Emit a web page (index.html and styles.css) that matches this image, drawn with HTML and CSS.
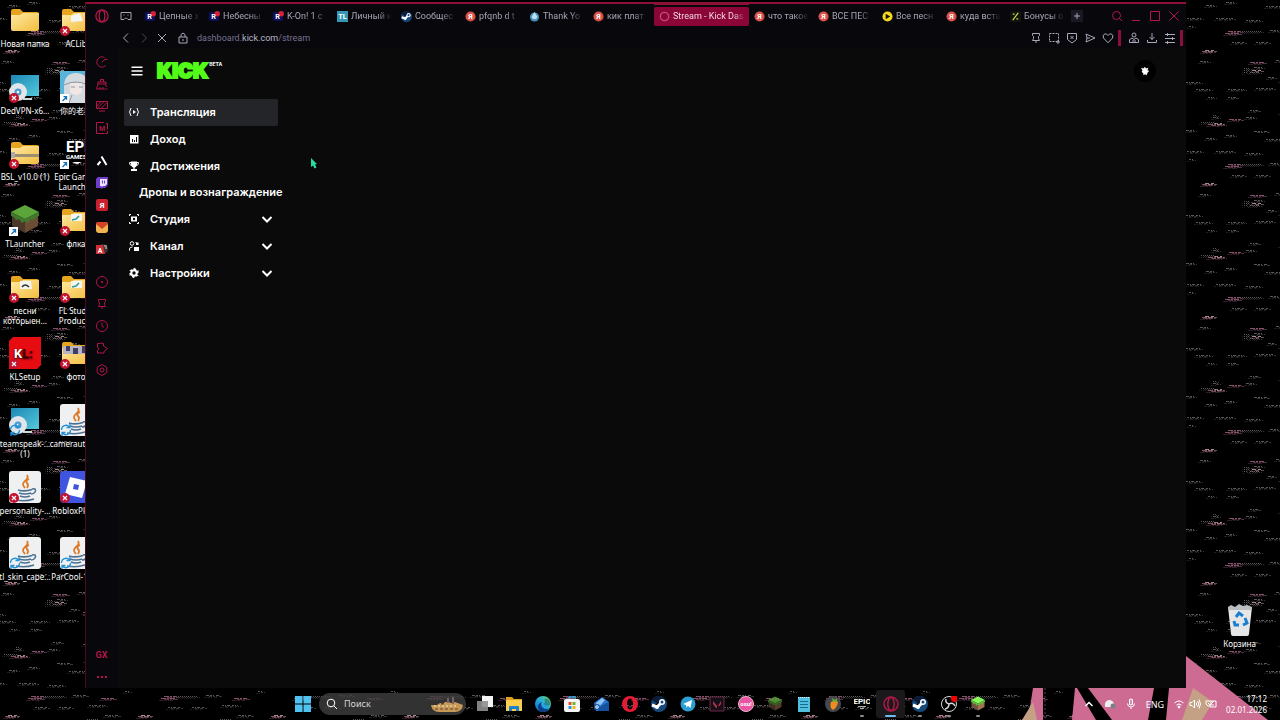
FILE: index.html
```html
<!DOCTYPE html>
<html lang="ru">
<head>
    <meta charset="UTF-8">
    <meta name="viewport" content="width=device-width, initial-scale=1.0">
    <title>Stream - Kick Dashboard</title>
    <link rel="stylesheet" href="styles.css">
</head>
<body>
    <!-- Wallpaper -->
    <svg class="wallpaper" aria-hidden="true">
        <defs>
            <pattern id="glitch" x="-11" y="0" width="133" height="133" patternUnits="userSpaceOnUse">
                <g id="streaks" fill="none" stroke="#5c5659" stroke-width="1">
                    <path stroke-dasharray="2 1 1 1 3 2" d="M1 18.500h15M30 18.500h17M60 20.500h14M80 6.500h20M110 12.500h18M3 26.500h4M46 42.500h12M70 42.500h12M100 40.500h16M0 82.500h14M10 89.500h15M42 89.500h16M70 88.500h17M100 92.500h20M22 97.500h6M42 97.500h8M64 110.500h10M94 112.500h14M126 104.500h7"/>
                    <path stroke-dasharray="3 1 2 1 1 2" d="M14 61.500h10M68 67.500h9M90 60.500h18M112 66.500h14M27 117.500h5M60 117.500h10M68 131.500h14M0 130.500h9M40 2.500h9M20 5.500h10M82 77.500h6M104 120.500h16M116 50.500h13M84 30.500h14M96 128.500h22"/>
                    <path stroke-dasharray="1 1" d="M54 31.500h22M15 122.500h14M58 70.500h5M58 72.500h4M58 68.500h5M64 72.500h10M27 115.500h4M98 54.500h12M118 84.500h8"/>
                    <path stroke="#84506a" stroke-dasharray="5 1 2 1" d="M39 33.500h15M42 31.500h12M16 51.500h11M64 62.500h14M22 124.500h16M43 119.500h12M94 80.500h16M112 33.500h13"/>
                    <path stroke="#a8888f" stroke-dasharray="4 2" d="M19 50.500h9M28 123.500h8M66 70.500h9M96 81.500h12"/>
                </g>
                <use href="#streaks" x="3" y="1" opacity=".6"/>
                <use href="#streaks" x="-2" y="2" opacity=".35"/>
            </pattern>
        </defs>
        <rect width="100%" height="100%" fill="#000"/>
        <rect width="100%" height="100%" fill="url(#glitch)"/>
    </svg>
    <svg class="wallpaper-figure" viewBox="0 0 260 64" aria-hidden="true">
        <path fill="#ce6b93" d="M166 0 248 64H52l3-32h111zM13 32h10v32H8z"/>
        <path fill="#c4a184" d="M173 32 193 46 182 64H162zM13 46 17 64H2z"/>
        <path fill="#000" d="M57 32H68L92 64H76zM134 32H149L146 64H128z"/>
        <path fill="none" stroke="#4f4547" stroke-dasharray="2 2" d="M25 32v32"/>
    </svg>

    <!-- Shared icon parts -->
    <svg class="sprite" aria-hidden="true">
        <defs>
            <linearGradient id="folder-fill" x1="0" y1="0" x2="1" y2="1"><stop offset="0" stop-color="#ffe9a3"/><stop offset="1" stop-color="#f2bd3e"/></linearGradient>
            <linearGradient id="sky" x1="0" y1="0" x2="1" y2="1"><stop offset="0" stop-color="#1b87b4"/><stop offset="1" stop-color="#55c9dc"/></linearGradient>
            <linearGradient id="edge-fill" x1="0" y1="1" x2="1" y2="0"><stop offset="0" stop-color="#1065c8"/><stop offset=".5" stop-color="#25a9e0"/><stop offset="1" stop-color="#65d85b"/></linearGradient>
        </defs>
        <symbol id="folder" viewBox="0 0 32 32">
            <path fill="#e5a520" d="M2 7q0-2 2-2h7l3 3h14q2 0 2 2v6H2z"/>
            <path fill="url(#folder-fill)" d="M2 11h9l3-2h16v16q0 2-2 2H4q-2 0-2-2z"/>
        </symbol>
        <symbol id="bad" viewBox="0 0 10 10">
            <circle cx="5" cy="5" r="5" fill="#c2122f"/>
            <path stroke="#fff" stroke-width="1.200" d="m3 3 4 4m0-4-4 4"/>
        </symbol>
        <symbol id="shortcut" viewBox="0 0 10 10">
            <path fill="#fff" d="M0 0h9v9H0z"/>
            <path fill="none" stroke="#1672b8" stroke-width="1.300" d="M2.500 7 6.500 3M3.500 2.700h3v3"/>
        </symbol>
        <symbol id="sync" viewBox="0 0 12 12">
            <path fill="none" stroke="#2492d6" stroke-width="1.300" d="M1.500 6a4.500 4.500 0 0 1 8-3M10.500 6a4.500 4.500 0 0 1-8 3M10 0v3.500H6.500M2 12V8.500h3.500"/>
        </symbol>
        <symbol id="java" viewBox="0 0 32 32">
            <rect width="32" height="32" rx="3" fill="#eef0f2"/>
            <path fill="none" stroke="#dd7a25" stroke-width="1.800" d="M18 4q2 3-2 6t0 7M20 8q-4 2-2 4t0 5"/>
            <path fill="none" stroke="#4c708f" stroke-width="1.600" d="M9 19q7 2 14-.5M10 22q6 2 12 0M11 25q5 2 10 0M7 29q9 2 18-1M23 18q5-1 3 3-1 2-4 2"/>
        </symbol>
        <symbol id="installer" viewBox="0 0 32 32">
            <path fill="url(#sky)" d="M2 4h28v21H2z"/>
            <path fill="#c8d7dc" d="M14 27h9v2h-9z"/>
            <circle cx="9" cy="21" r="9" fill="#dfe5e8"/>
            <circle cx="9" cy="21" r="3.500" fill="#4d9bd0"/>
            <circle cx="9" cy="21" r="1.300" fill="#fff"/>
        </symbol>
        <symbol id="grass" viewBox="0 0 32 32">
            <path fill="#4b382b" d="M3 9 16 15v14L3 22z"/>
            <path fill="#6b4c35" d="M29 9 16 15v14l13-7z"/>
            <path fill="#5ba53b" d="M16 1 30 8 16 15 2 8z"/>
            <path fill="#407b2b" d="M2 8 16 15 30 8v4l-3 1-2 3-3-1-3 4-3-2-3 2-3-4-3 1-2-3-3-1z"/>
        </symbol>
        <symbol id="steam" viewBox="0 0 16 16">
            <circle cx="8" cy="8" r="8" fill="#174a7c"/>
            <path fill="#0b1c38" d="M1 4a8 8 0 0 1 14 0L8 9z"/>
            <path stroke="#fff" stroke-width="3" d="M1 9l5 2 5-5"/>
            <circle cx="11" cy="6" r="3" fill="#fff"/><circle cx="11" cy="6" r="1.500" fill="#174a7c"/>
            <circle cx="6" cy="11" r="2" fill="#fff"/>
        </symbol>
        <symbol id="ya" viewBox="0 0 12 12">
            <circle cx="6" cy="6" r="5.500" fill="#dd5048"/>
            <text x="6" y="9" text-anchor="middle" class="glyph" font-size="8">Я</text>
        </symbol>
        <symbol id="rezka" viewBox="0 0 12 12">
            <rect y="1" width="11" height="10" rx="2" fill="#10105a"/>
            <circle cx="9" cy="3" r="3" fill="#d8203c"/>
            <text x="5" y="9" text-anchor="middle" class="glyph" font-size="8">R</text>
        </symbol>
        <symbol id="opera" viewBox="0 0 16 16">
            <circle cx="8" cy="8" r="7" fill="none" stroke="currentColor" stroke-width="1.500"/>
            <ellipse cx="8" cy="8" rx="3.200" ry="6.500" fill="none" stroke="currentColor" stroke-width="1.500"/>
        </symbol>
        <symbol id="pin" viewBox="0 0 12 12"><path d="M2.500 1.500h7v2l-1 1v2l1 2h-7l1-2v-2l-1-1zM6 8.500V11"/></symbol>
        <symbol id="chevron" viewBox="0 0 12 12"><path d="m1.500 4 4.500 4.500L10.500 4"/></symbol>
    </svg>

    <main class="desktop">
        <div class="shortcuts">
            <a class="shortcut" href="#"><svg viewBox="0 0 32 32"><use href="#folder"/></svg><span>Новая папка</span></a>
            <a class="shortcut" href="#"><svg viewBox="0 0 32 32"><use href="#installer"/><use href="#bad" y="22" width="10" height="10"/></svg><span>DedVPN-x6...</span></a>
            <a class="shortcut" href="#"><svg viewBox="0 0 32 32"><use href="#folder"/><path fill="#9c8f71" d="M2 17h28v3H2z"/><path fill="#aaa" d="M2 15h4v6H2z"/><use href="#bad" y="22" width="10" height="10"/></svg><span>BSL_v10.0 (1)</span></a>
            <a class="shortcut" href="#"><svg viewBox="0 0 32 32"><use href="#grass"/><use href="#shortcut" y="23" width="10" height="10"/></svg><span>TLauncher</span></a>
            <a class="shortcut" href="#"><svg viewBox="0 0 32 32"><use href="#folder"/><path fill="#f4f4f0" d="M11 10h11l1 8H11z"/><path fill="none" stroke="#333" stroke-width="1.500" d="M13 16q3-4 7 0"/><use href="#bad" y="22" width="10" height="10"/></svg><span>песни<br>которыен...</span></a>
            <a class="shortcut" href="#"><svg viewBox="0 0 32 32"><path fill="#e70b12" d="M4 0h28v28l-4 4H0V4z"/><text x="5" y="21" class="glyph" font-size="13">K<tspan fill="#3b0204">L:</tspan></text><use href="#bad" y="22" width="10" height="10"/></svg><span>KLSetup</span></a>
            <a class="shortcut" href="#"><svg viewBox="0 0 32 32"><use href="#installer"/><use href="#sync" y="20" width="12" height="12"/></svg><span>teamspeak-...<br>(1)</span></a>
            <a class="shortcut" href="#"><svg viewBox="0 0 32 32"><use href="#java"/><use href="#bad" y="22" width="10" height="10"/></svg><span>personality-...</span></a>
            <a class="shortcut" href="#"><svg viewBox="0 0 32 32"><use href="#java"/><use href="#sync" y="20" width="12" height="12"/></svg><span>tl_skin_cape...</span></a>

            <a class="shortcut" href="#"><svg viewBox="0 0 32 32"><use href="#folder"/><path fill="#f4f4f0" d="m11 12 9-3 3 8-12 1z"/><use href="#bad" y="22" width="10" height="10"/></svg><span>ACLib</span></a>
            <a class="shortcut" href="#"><svg viewBox="0 0 32 32"><path fill="#58b4d8" d="M0 0h32v32H0z"/><path fill="#d4dbe0" d="M4 32V14Q5 2 16 2t12 12v18z"/><path fill="#f0e6e4" d="M10 12h12v9q-6 6-12 0z"/><path fill="none" stroke="#8c98a4" d="M4 14q12-6 24 0M11 16h4m4 0h4M12 24l-3 8"/><use href="#shortcut" y="23" width="10" height="10"/></svg><span>你的老婆</span></a>
            <a class="shortcut" href="#"><svg viewBox="0 0 32 32"><text x="6" y="15" class="glyph narrow" font-size="15">EPIC</text><text x="6" y="22" class="glyph" font-size="6">GAMES</text><path fill="#fff" d="M12 25h10l-5 2z"/><use href="#shortcut" y="23" width="10" height="10"/></svg><span>Epic Games<br>Launcher</span></a>
            <a class="shortcut" href="#"><svg viewBox="0 0 32 32"><use href="#folder"/><path fill="#f4f4f0" d="M11 10h11v7H11z"/><path fill="none" stroke="#2d9b94" stroke-width="1.500" d="m12 16 4-1 3-3"/><use href="#bad" y="22" width="10" height="10"/></svg><span>флка</span></a>
            <a class="shortcut" href="#"><svg viewBox="0 0 32 32"><use href="#folder"/><path fill="#f4f4f0" d="M11 10h11v7H11z"/><path fill="none" stroke="#2d9b94" stroke-width="1.500" d="m12 16 4-1 3-3"/><use href="#bad" y="22" width="10" height="10"/></svg><span>FL Studio<br>Producer</span></a>
            <a class="shortcut" href="#"><svg viewBox="0 0 32 32"><use href="#folder"/><path fill="#b8b2c4" d="M3 9h26v8H3z"/><path fill="#3c3f64" d="M6 9h4v5H6zM13 11h5v6h-5zM22 9h3v7h-3z"/><use href="#bad" y="22" width="10" height="10"/></svg><span>фото</span></a>
            <a class="shortcut" href="#"><svg viewBox="0 0 32 32"><use href="#java"/><use href="#sync" y="20" width="12" height="12"/></svg><span>camerautils-...</span></a>
            <a class="shortcut" href="#"><svg viewBox="0 0 32 32"><rect width="32" height="32" rx="4" fill="#3f55e0"/><path fill="#fff" d="m10 6 17 4-5 17-17-4z"/><path fill="#3f55e0" d="m14 13 5 1-1 5-5-1z"/><use href="#bad" y="22" width="10" height="10"/></svg><span>RobloxPlay...</span></a>
            <a class="shortcut" href="#"><svg viewBox="0 0 32 32"><use href="#java"/><use href="#sync" y="20" width="12" height="12"/></svg><span>ParCool-1.2...</span></a>
        </div>

        <!-- Browser window -->
        <section class="browser">
            <aside class="rail">
                <a class="rail-logo" href="#" aria-label="Opera GX"><svg viewBox="0 0 16 16"><use href="#opera"/></svg></a>
                <a href="#" aria-label="GX Control"><svg viewBox="0 0 12 12"><path d="M9.500 9.500A5 5 0 1 1 8.500 1.700M6 6l3-2.500h2.500"/></svg></a>
                <a href="#" aria-label="GX Cleaner"><svg viewBox="0 0 12 12"><path d="M4.500 4V1.500h3V4M2 4h8v2H2zM2 6l-1.500 5h9M9.500 6l1 3M4 11V9m3 2V9M10 11h1.500"/></svg></a>
                <a href="#" aria-label="GX Mods"><svg viewBox="0 0 12 12"><path d="M.5 1.500h11v7H.5zM1 6l4-4.500M1 8.500l7-7M5 8.500l6-6M3 11h6"/></svg></a>
                <a href="#" aria-label="Player"><svg viewBox="0 0 12 12"><path d="M8 .5H.5v11h8M10 1.500h1.500v6M11.500 9v2.500H9"/><text x="6" y="8.500" text-anchor="middle" class="mark" font-size="7">M</text></svg></a>
                <a class="rail-app" href="#" aria-label="Aria"><svg viewBox="0 0 12 12"><path stroke="#fff" stroke-width="2" d="M1.500 10 4.500 6.500M5.500 1.500 10.500 10"/></svg></a>
                <a href="#" aria-label="Twitch"><svg viewBox="0 0 12 12"><path fill="#6f3ccc" stroke="none" d="M2 0h10v8l-3 3H7l-2 1v-1H0V2z"/><path fill="#ece4ff" stroke="none" d="M4 2h7v5L9 9H7L5.500 10V9H4z"/><path stroke="#6f3ccc" d="M6.500 3.500v3m2-3v3"/></svg></a>
                <a href="#" aria-label="Яндекс"><svg viewBox="0 0 12 12"><rect width="12" height="12" rx="2" fill="#c9202f" stroke="none"/><text x="6" y="9" text-anchor="middle" class="glyph" font-size="8">Я</text></svg></a>
                <a href="#" aria-label="Почта"><svg viewBox="0 0 12 12"><rect y="1" width="12" height="11" rx="3" fill="#f0b450" stroke="none"/><path fill="#d64225" stroke="none" d="M0 3q0-2 2-2h8q2 0 2 2L6 8z"/></svg></a>
                <a href="#" aria-label="Переводчик"><svg viewBox="0 0 12 12"><circle cx="7" cy="6" r="5" fill="#333" stroke="none"/><path fill="#d02f35" stroke="none" d="M0 2h7l2 9H0z"/><text x="4" y="9.500" text-anchor="middle" class="glyph" font-size="7">A</text><path stroke="#ddd" d="M8 3h3M9 5h2"/></svg></a>
                <a class="rail-app" href="#" aria-label="Начальная страница"><svg viewBox="0 0 12 12"><circle cx="6" cy="6" r="5.500"/><path fill="currentColor" d="M5.500 5.500h1v1h-1z"/></svg></a>
                <a href="#" aria-label="Закреплённые"><svg viewBox="0 0 12 12"><use href="#pin"/></svg></a>
                <a href="#" aria-label="История"><svg viewBox="0 0 12 12"><circle cx="6" cy="6" r="5.500"/><path d="M6 2.500V6l2 1.500"/></svg></a>
                <a href="#" aria-label="Расширения"><svg viewBox="0 0 12 12"><path d="M1.500 1.500h3q1.500-1 3 0V4l4 2.500L8 9.500v1.500H1.500V8.500Q4 7 1.500 5z"/></svg></a>
                <a href="#" aria-label="Настройки"><svg viewBox="0 0 12 12"><path d="m6 .5 4.800 2.800v5.400L6 11.500 1.200 8.700V3.300z"/><circle cx="6" cy="6" r="2"/></svg></a>
                <a class="rail-gx" href="#">GX</a>
                <a href="#" aria-label="Ещё"><svg viewBox="0 0 12 12"><path stroke-width="2" stroke-dasharray="2 2" d="M1 6h10"/></svg></a>
            </aside>

            <div class="chrome">
                <div class="tabbar">
                    <button class="tool island" aria-label="Вкладки"><svg viewBox="0 0 12 12"><path d="M1 2.500h10v7H8L6.500 8h-1L4 9.500H1zM3.500 5h1m3 0h1"/></svg></button>
                    <nav class="tabs">
                        <a href="#"><svg viewBox="0 0 12 12"><use href="#rezka"/></svg><span>Цепные х</span></a>
                        <a href="#"><svg viewBox="0 0 12 12"><use href="#rezka"/></svg><span>Небесны</span></a>
                        <a href="#"><svg viewBox="0 0 12 12"><use href="#rezka"/></svg><span>K-On! 1 с</span></a>
                        <a href="#"><svg viewBox="0 0 12 12"><path fill="#3597b5" d="M0 0h12v12H0z"/><text x="6" y="9" text-anchor="middle" class="glyph" font-size="8">TL</text></svg><span>Личный к</span></a>
                        <a href="#"><svg viewBox="0 0 16 16"><use href="#steam"/></svg><span>Сообщес</span></a>
                        <a href="#"><svg viewBox="0 0 12 12"><use href="#ya"/></svg><span>pfqnb d t</span></a>
                        <a href="#"><svg viewBox="0 0 12 12"><circle cx="6" cy="6.500" r="5" fill="#458fb8"/><path fill="#b9dff0" d="M6 1 9 6a3 3 0 1 1-6 0z"/></svg><span>Thank Yo</span></a>
                        <a href="#"><svg viewBox="0 0 12 12"><use href="#ya"/></svg><span>кик плат</span></a>
                        <a class="active" href="#"><svg viewBox="0 0 12 12"><circle cx="6" cy="6" r="4.500" fill="none" stroke="#c24a72" stroke-width="1.500"/></svg><span>Stream - Kick Das</span></a>
                        <a href="#"><svg viewBox="0 0 12 12"><use href="#ya"/></svg><span>что такое</span></a>
                        <a href="#"><svg viewBox="0 0 12 12"><use href="#ya"/></svg><span>ВСЕ ПЕС</span></a>
                        <a href="#"><svg viewBox="0 0 12 12"><circle cx="6" cy="6" r="5.500" fill="#f5d91c"/><path fill="#111" d="M4 3v6l5-3z"/></svg><span>Все песн</span></a>
                        <a href="#"><svg viewBox="0 0 12 12"><use href="#ya"/></svg><span>куда вста</span></a>
                        <a href="#"><svg viewBox="0 0 12 12"><path fill="#111310" d="M0 0h12v12H0z"/><path stroke="#d3d840" stroke-width="1.300" d="m3 10 6-8M3 3.500h2M7 8.500h2"/></svg><span>Бонусы о</span></a>
                    </nav>
                    <button class="new-tab" aria-label="Новая вкладка"><svg viewBox="0 0 12 12"><path d="M6 3v6M3 6h6"/></svg></button>
                    <div class="window-buttons">
                        <button aria-label="Поиск"><svg viewBox="0 0 12 12"><circle cx="5.500" cy="5.500" r="4"/><path d="m8.500 8.500 2.500 2.500"/></svg></button>
                        <button aria-label="Свернуть"><svg viewBox="0 0 12 12"><path d="M2 10.500h8"/></svg></button>
                        <button aria-label="Развернуть"><svg viewBox="0 0 12 12"><path d="M1.500 1.500h9v9h-9z"/></svg></button>
                        <button aria-label="Закрыть"><svg viewBox="0 0 12 12"><path d="m1.500 1.500 9 9m0-9-9 9"/></svg></button>
                    </div>
                </div>
                <div class="toolbar">
                    <button class="tool" aria-label="Назад"><svg viewBox="0 0 12 12"><path d="M8 1.500 3.500 6 8 10.500"/></svg></button>
                    <button class="tool dim" aria-label="Вперёд"><svg viewBox="0 0 12 12"><path d="M4 1.500 8.500 6 4 10.500"/></svg></button>
                    <button class="tool" aria-label="Остановить"><svg viewBox="0 0 12 12"><path d="m2 2 8 8m0-8-8 8"/></svg></button>
                    <button class="tool lock" aria-label="Сведения о сайте"><svg viewBox="0 0 12 12"><path d="M2 5h8v6H2zM4 5V2.500q2-3 4 0V5M6 7v2"/></svg></button>
                    <div class="address" role="textbox" aria-label="Адрес">dashboard.<b>kick.com</b>/stream</div>
                    <button class="tool" aria-label="Закрепить"><svg viewBox="0 0 12 12"><use href="#pin"/></svg></button>
                    <button class="tool" aria-label="Снимок"><svg viewBox="0 0 12 12"><path stroke-dasharray="2 1" d="M1.500 1.500h9v8h-9z"/><path d="M8 10h4m-2-2v4"/></svg></button>
                    <button class="tool" aria-label="Блокировка рекламы"><svg viewBox="0 0 12 12"><path d="M1.500 1.500h9v6L6 11 1.500 7.500zM4.500 4l3 3m0-3-3 3"/></svg></button>
                    <button class="tool" aria-label="Моя лента"><svg viewBox="0 0 12 12"><path d="m2 2 9 4-9 4 1-4zM3 6h3"/></svg></button>
                    <button class="tool" aria-label="В закладки"><svg viewBox="0 0 12 12"><path d="M6 10.800 1.500 6q-1-3 1-4T6 3.500Q7.500 1 9.500 2t1 4z"/></svg></button>
                    <i class="mark-line"></i>
                    <button class="tool" aria-label="Профиль"><svg viewBox="0 0 12 12"><circle cx="6" cy="3" r="2"/><path d="M4 6 1.500 7.500v3h9v-3L8 6M4 6l2 1.500L8 6M4 9h4"/></svg></button>
                    <button class="tool" aria-label="Загрузки"><svg viewBox="0 0 12 12"><path d="M6 1v6.500M3.500 5 6 7.500 8.500 5M1.500 8v2.500h9V8"/></svg></button>
                    <button class="tool" aria-label="Меню"><svg viewBox="0 0 12 12"><path d="M1 2.500h10M1 6.500h10M1 10.500h10M3.500 1v3M8.500 5v3M3.500 9v3"/></svg></button>
                    <i class="mark-line"></i>
                </div>

                <!-- Kick page -->
                <div class="page">
                    <header class="page-head">
                        <button class="burger" aria-label="Меню"><svg viewBox="0 0 12 12"><path stroke-width="1.500" d="M.5 2.200h11M.5 6h11M.5 9.800h11"/></svg></button>
                        <a class="logo" href="#">KICK<sup>BETA</sup></a>
                        <button class="avatar" aria-label="Аккаунт"><svg viewBox="0 0 12 12"><path fill="#fff" stroke="none" d="m1 2 3 1 2-2 1 2 3-1-1 3 2 1-2 2-1 3-2-1-2 1V9L2 7l1-2z"/></svg></button>
                    </header>
                    <nav class="menu">
                        <a class="active" href="#"><svg viewBox="0 0 12 12"><path d="M3 2Q.2 6 3 10M9 2q2.800 4 0 8"/><path fill="#fff" stroke="none" d="M5 4v4l3-2z"/></svg>Трансляция</a>
                        <a href="#"><svg viewBox="0 0 12 12"><path fill="#fff" stroke="none" d="M2 2h8.500v8.500H2z"/><path stroke="#0a0a0a" d="M4.500 6v3M6.500 7v2M8.500 4v5"/></svg>Доход</a>
                        <a href="#"><svg viewBox="0 0 12 12"><path fill="#fff" stroke="none" d="M3 1.500h6V5q-1 2.500-2.300 2.500V9H9v2H3V9h2.300V7.500Q4 7.500 3 5z"/><path d="M3 2.500H1.500q0 3 2 3M9 2.500h1.500q0 3-2 3"/></svg>Достижения</a>
                        <a class="no-icon" href="#">Дропы и вознаграждение</a>
                        <button><svg viewBox="0 0 12 12"><path d="M3 1.500H1.500V3M9 1.500h1.500V3M3 10.500H1.500V9M9 10.500h1.500V9"/><path fill="#fff" stroke="none" d="M3 3.500h6v5H3z"/><circle cx="6" cy="6" r="1.200" fill="#0a0a0a" stroke="none"/></svg>Студия<svg class="arrow" viewBox="0 0 12 12"><use href="#chevron"/></svg></button>
                        <button><svg viewBox="0 0 12 12"><circle cx="4" cy="3.500" r="1.800"/><path d="M1.500 10.500V9q0-2 3-2M7.500 2.500h1"/><path fill="#fff" stroke="none" d="M8 2.500h2.500V5H8zM6 7h5v4H6z"/></svg>Канал<svg class="arrow" viewBox="0 0 12 12"><use href="#chevron"/></svg></button>
                        <button><svg viewBox="0 0 12 12"><circle cx="6" cy="6" r="2.700" stroke-width="2"/><path stroke-width="2" stroke-dasharray="2 2" d="m6 2 3.500 2v4L6 10 2.500 8V4z"/></svg>Настройки<svg class="arrow" viewBox="0 0 12 12"><use href="#chevron"/></svg></button>
                    </nav>
                </div>
            </div>
        </section>

        <div class="right-side">
            <a class="shortcut" href="#"><svg viewBox="0 0 32 32"><path fill="#e4e6e8" d="M4 3h24l-3 27q0 2-2 2H9q-2 0-2-2z"/><path fill="#b9bec3" d="m4 3 3-2 4 2 4-3 4 2 4-1 5 2-1 3H5z"/><g fill="none" stroke="#1b7fce" stroke-width="3"><path d="m12 13 3-4 4 3M21 14l2 5-4 2M15 21H11l-1-4"/></g></svg><span>Корзина</span></a>
        </div>
    </main>

    <svg class="cursor" viewBox="0 0 12 16" aria-hidden="true"><path fill="#27dca0" d="m3 3 6 6-2 .5 1.500 3-2 1L5 10.500 3 12z"/></svg>

    <footer class="taskbar">
        <div class="apps">
            <button aria-label="Пуск"><svg viewBox="0 0 16 16"><path fill="#4fc3f0" d="M0 0h7.500v7.500H0zM8.500 0H16v7.500H8.500zM0 8.500h7.500V16H0zM8.500 8.500H16V16H8.500z"/></svg></button>
            <label class="search">
                <svg viewBox="0 0 12 12"><circle cx="5" cy="5" r="3.800"/><path d="m8 8 3 3"/></svg>
                <input type="text" placeholder="Поиск">
                <svg class="town" viewBox="0 0 34 16"><path fill="#c69a55" d="M1 9h6l3-2 3 1 2-2h4l2 1 4-1 8 3q-1 7-8 7H9Q2 16 1 9z"/><path fill="#77646e" d="M17 7V3l1-2 1 2v4zM22 8V2l1-2 1 2v6z"/><path stroke="#f1e4c8" stroke-dasharray="2 2" d="M4 10h24"/><path stroke="#653c32" stroke-dasharray="3 2" d="M5 13h23M11 8h4"/></svg>
            </label>
            <button aria-label="Представление задач"><svg viewBox="0 0 16 16"><path fill="#f3f3f3" d="M5 0h11v11H5z"/><path fill="#8f8f8f" d="M0 5h11v10H0z" opacity=".9"/></svg></button>
            <button aria-label="Проводник"><svg viewBox="0 0 16 16"><path fill="#dca11c" d="M0 1h6l2 2h8v3H0z"/><path fill="#fbcf4b" d="M0 4h16v11H0z"/><path fill="#1d7fd0" d="M3 15v-4q0-1 1-1h8q1 0 1 1v4h-3v-2H6v2z"/></svg></button>
            <button aria-label="Edge"><svg viewBox="0 0 16 16"><circle cx="8" cy="8" r="8" fill="url(#edge-fill)"/><path fill="#0c3e86" d="M6 8q0 5 6 5l2-1q-3 5-8 4-5-3-2-8 1-2 4-2-2 0-2 2z"/><path fill="#000" d="M9 8q1 3 6 1 1-3-1-5-1-2-5-1 2 2 0 5z" opacity=".25"/></svg></button>
            <button aria-label="Store"><svg viewBox="0 0 16 16"><path fill="none" stroke="#3ba7dc" stroke-width="1.500" d="M5 4V1h6v3"/><rect y="3" width="16" height="13" rx="2" fill="#f4f4f4"/><path fill="#e3502c" d="M4.500 6h3v3h-3z"/><path fill="#72b52c" d="M8.500 6h3v3h-3z"/><path fill="#2796df" d="M4.500 10h3v3h-3z"/><path fill="#f4b81d" d="M8.500 10h3v3h-3z"/></svg></button>
            <button aria-label="Outlook"><svg viewBox="0 0 16 16"><path fill="#2772cc" d="m1 7 8-6 7 5v9H3z"/><path fill="#8ec5f3" d="M3 7 9 2l3 2-7 8z"/><path fill="#1451a0" d="m8 10 8-4v9H5z"/><circle cx="4" cy="11" r="3" fill="#1458aa"/><circle cx="4" cy="11" r="1.300" fill="none" stroke="#fff"/></svg></button>
            <button aria-label="Opera"><svg viewBox="0 0 16 16"><path fill="#e41d34" fill-rule="evenodd" d="M8 0a8 8 0 1 0 0 16A8 8 0 0 0 8 0zm0 2.500c2 0 3 2.500 3 5.500s-1 5.500-3 5.500S5 11 5 8s1-5.500 3-5.500z"/></svg></button>
            <button aria-label="Steam"><svg viewBox="0 0 16 16"><use href="#steam"/></svg></button>
            <button aria-label="Telegram"><svg viewBox="0 0 16 16"><circle cx="8" cy="8" r="7.500" fill="#2b9fd1"/><path fill="#fff" d="m3 8 9-4-1.500 8L8 10l-1.500 1.500L6 9z"/></svg></button>
            <button aria-label="Valorant"><svg viewBox="0 0 16 16"><path fill="#151018" stroke="#6d2843" d="M1 1h14v14H1z"/><path fill="#b8304f" d="m4 5 4 5v2H7L4 8zM12 5v3l-1.500 2H9z"/></svg></button>
            <button aria-label="osu!"><svg viewBox="0 0 16 16"><circle cx="8" cy="8" r="7.500" fill="#e955a2" stroke="#f4b5d4"/><text x="8" y="10" text-anchor="middle" class="glyph" font-size="6">osu!</text></svg></button>
            <button aria-label="Minecraft"><svg viewBox="0 0 32 32" opacity=".8"><use href="#grass"/></svg></button>
            <button aria-label="Блокнот"><svg viewBox="0 0 16 16"><path fill="#52bede" d="M2 1h12v15H2z"/><path stroke="#d8f4fa" stroke-dasharray="1 1" d="M2 1.500h12"/><path stroke="#176a92" d="M4 5.500h8M4 8.500h8M4 11.500h8"/></svg></button>
            <button aria-label="FL Studio"><svg viewBox="0 0 16 16"><circle cx="8" cy="8" r="8" fill="#45484c"/><path fill="#f08a22" d="M6 6q4-3 7 0-1 6-5 8-4-3-2-8z"/><path fill="#6cae38" d="m8 6-1-4 3 2 2-2v4z"/></svg></button>
            <button class="running" aria-label="Epic Games"><svg viewBox="0 0 16 16"><text x="8" y="8" text-anchor="middle" class="glyph narrow" font-size="8">EPIC</text><path stroke="#aaa" d="M4 10.500h8M6 12.500h4"/></svg></button>
            <button class="running current" aria-label="Opera GX"><svg viewBox="0 0 16 16"><use href="#opera"/></svg></button>
            <button class="running" aria-label="Steam"><svg viewBox="0 0 16 16"><use href="#steam"/></svg></button>
            <button class="running" aria-label="OBS"><svg viewBox="0 0 16 16"><g fill="none" stroke="#d8d8d8"><circle cx="8" cy="8" r="7.500"/><path d="M8 8q-4-1-3-5M8 8q4-2 6 2M8 8q0 4-4 5" stroke-width="1.500"/></g><circle cx="13.500" cy="2.500" r="3.500" fill="#f20000"/></svg></button>
            <button class="running" aria-label="TLauncher"><svg class="bright" viewBox="0 0 32 32"><use href="#grass"/></svg></button>
        </div>
        <div class="tray">
            <button aria-label="Скрытые значки"><svg viewBox="0 0 12 12"><path stroke-width="1.500" d="m2.500 8 3.500-3.500L9.500 8"/></svg></button>
            <button aria-label="OneDrive"><svg viewBox="0 0 12 12"><path fill="#eee" stroke="none" d="M1 9q-1-6 4-7 4 0 5 4H7v3z"/><circle cx="9" cy="8" r="2.500" fill="#7a8088" stroke="none"/></svg></button>
            <button aria-label="Микрофон"><svg viewBox="0 0 12 12"><path fill="#c795ad" d="M4.500 1.500q1.500-1 3 0v5q-1.500 1-3 0z"/><path d="M2.500 5.500q0 3.500 3.500 3.500t3.500-3.500M6 9v2"/></svg></button>
            <button class="lang">ENG</button>
            <button class="status" aria-label="Сеть, звук и питание">
                <svg viewBox="0 0 12 12"><path d="M1.500 5Q6 1 10.500 5M3.500 7Q6 5 8.500 7"/><circle cx="6" cy="9" r="1" fill="#fff"/></svg>
                <svg viewBox="0 0 12 12"><path d="M1 4.500h2L5.500 2v8L3 7.500H1zM7 4.500q1.500 1.500 0 3M8.500 3q2.500 3 0 6M10 1.500q3 4.500 0 9"/></svg>
                <svg viewBox="0 0 12 12"><path d="M1 3h5v5H3L1 6zM6 3h5v6H5M3 5l2 2 4-4M8 6v2"/></svg>
            </button>
            <time class="clock">17:12<br>02.01.2026</time>
        </div>
    </footer>
</body>
</html>
```
FILE: styles.css
```css
* {
    box-sizing: border-box;
}

body {
    margin: 0;
    min-height: 100vh;
    display: flex;
    flex-direction: column;
    background-color: #000;
    color: white;
    font-family: "Noto Sans", "Noto Sans CJK SC", sans-serif;
    overflow: hidden;
}

a {
    color: inherit;
    text-decoration: none;
}

button {
    display: flex;
    align-items: center;
    justify-content: center;
    padding: 0;
    border: none;
    background: none;
    color: inherit;
    font: inherit;
    cursor: pointer;
}

svg {
    display: block;
    flex: none;
}

.glyph,
.mark {
    font-family: "Roboto", sans-serif;
    font-weight: 700;
    fill: white;
    stroke: none;
}

.mark {
    fill: #b01846;
}

.narrow {
    font-family: "Liberation Sans Narrow", "Roboto", sans-serif;
}

.sprite {
    position: absolute;
    width: 0;
    height: 0;
}

.wallpaper {
    position: absolute;
    top: 0;
    left: 0;
    width: 100%;
    height: 100%;
    z-index: -2;
}

.wallpaper-figure {
    position: absolute;
    right: 0;
    bottom: 0;
    width: 260px;
    height: 64px;
    z-index: -1;
}

/* Desktop */
.desktop {
    flex: 1;
    display: grid;
    grid-template-columns: 85px 1fr 94px;
    padding-top: 2px;
}

.shortcuts {
    display: grid;
    grid-template-columns: 50px 52px;
    grid-template-rows: repeat(9, 1fr);
    grid-auto-flow: column;
    height: 600px;
    margin-top: 2px;
    overflow: hidden;
}

.shortcut {
    display: flex;
    flex-direction: column;
    align-items: center;
    gap: 3px;
    font-size: 8px;
    line-height: 10px;
    text-align: center;
    white-space: nowrap;
    text-shadow: 0 1px 2px #000;
}

.shortcut svg {
    width: 32px;
    height: 32px;
}

.right-side {
    display: flex;
    justify-content: flex-end;
    align-items: flex-end;
    padding: 0 24px 39px 0;
}

/* Browser window */
.browser {
    display: flex;
    background-color: #07070c;
    border-top: 2px solid #8c1038;
    border-left: 1px solid #4a0a20;
}

.browser svg {
    width: 12px;
    height: 12px;
    fill: none;
    stroke: currentColor;
}

.rail {
    display: flex;
    flex-direction: column;
    align-items: center;
    gap: 10px;
    width: 31px;
    padding: 5px 0;
    color: #b01846;
}

.rail .rail-logo {
    margin-bottom: 23px;
}

.browser .rail-logo svg {
    width: 14px;
    height: 14px;
}

.rail-app {
    margin-top: 11px;
}

.rail-gx {
    margin-top: auto;
    font: 700 9px/12px "Roboto", sans-serif;
}

.chrome {
    flex: 1;
    min-width: 0;
    display: flex;
    flex-direction: column;
}

.tabbar {
    display: flex;
    align-items: center;
    height: 24px;
    font: 9px/12px "Roboto", sans-serif;
    color: #a9a6b5;
}

.tool {
    width: 18px;
    height: 18px;
    color: #aaa7b8;
}

.dim {
    color: #4c4a55;
}

.tabs {
    flex: 0 1 930px;
    display: flex;
    min-width: 0;
    margin-left: 5px;
}

.tabs a {
    flex: 0 1 64px;
    min-width: 0;
    display: flex;
    align-items: center;
    gap: 3px;
    height: 19px;
    padding: 0 4px 0 5px;
}

.browser .tabs svg {
    width: 11px;
    height: 11px;
    stroke: none;
}

.tabs span {
    flex: 1;
    white-space: nowrap;
    mask-image: linear-gradient(to right, #000 65%, transparent);
}

.tabs .active {
    position: relative;
    flex-basis: 95px;
    margin-left: 2px;
    border-radius: 2px;
    background-color: #8b0637;
    color: #f0d5df;
}

.tabs .active::before {
    content: "";
    position: absolute;
    top: -3px;
    left: 0;
    right: 0;
    height: 1px;
    background-color: #8c1038;
}

.tabs .active span {
    mask-image: linear-gradient(to right, #000 85%, transparent);
}

.new-tab {
    width: 12px;
    height: 12px;
    margin-left: 1px;
    background-color: #1b1826;
}

.window-buttons {
    display: flex;
    gap: 7px;
    margin-left: auto;
    padding-right: 6px;
    color: #b01846;
}

.toolbar {
    display: flex;
    align-items: center;
    height: 20px;
}

.lock {
    margin: 0 5px 0 3px;
}

.address {
    flex: 1;
    font: 9px/12px "Roboto", sans-serif;
    color: #77718f;
}

.address b {
    color: #b9b5c6;
    font-weight: 400;
}

.mark-line {
    width: 3px;
    height: 16px;
    margin: 0 4px 0 1px;
    background-color: #8b0f3c;
}

.toolbar .mark-line:last-child {
    margin-right: 3px;
}

/* Kick page */
.page {
    flex: 1;
    padding: 8px 30px 0 7px;
    background-color: #0a0a0a;
    font-family: "Inter", sans-serif;
}

.page-head {
    display: flex;
    align-items: center;
    gap: 14px;
    height: 30px;
    padding-left: 7px;
}

.logo {
    display: flex;
    gap: 1px;
    font-size: 20px;
    font-weight: 900;
    line-height: 20px;
    color: #53fc18;
    -webkit-text-stroke: 2px #53fc18;
}

.logo sup {
    font-size: 5px;
    font-weight: 700;
    line-height: 6px;
    color: white;
    -webkit-text-stroke: 0;
}

.avatar {
    width: 22px;
    height: 22px;
    margin-left: auto;
    border-radius: 50%;
    background-color: #000;
}

.page .avatar svg {
    width: 10px;
    height: 10px;
}

.menu {
    display: grid;
    grid-template-columns: 100%;
    grid-template-rows: repeat(7, 1fr);
    width: 154px;
    height: 187px;
    margin-top: 13px;
    font-size: 11px;
    font-weight: 600;
}

.menu a,
.menu button {
    display: flex;
    align-items: center;
    justify-content: flex-start;
    gap: 10px;
    padding: 0 5px 0 4px;
    border-radius: 2px;
    white-space: nowrap;
}

.menu .active {
    background-color: #232528;
}

.menu .no-icon {
    padding: 0 0 0 15px;
}

.menu .arrow {
    margin-left: auto;
    stroke-width: 2;
}

.cursor {
    position: absolute;
    top: 155px;
    left: 308px;
    width: 12px;
    height: 16px;
}

/* Taskbar */
.taskbar {
    display: grid;
    grid-template-columns: 1fr auto 1fr;
    height: 32px;
}

.apps {
    grid-column: 2;
    display: flex;
    align-items: center;
}

.apps button {
    width: 29px;
    height: 28px;
}

.apps button svg {
    width: 16px;
    height: 16px;
}

.bright {
    filter: brightness(1.5);
}

.search {
    display: flex;
    align-items: center;
    gap: 6px;
    width: 147px;
    height: 22px;
    margin: 0 4px 0 2px;
    padding: 0 2px 0 7px;
    border-radius: 11px;
    background-color: rgba(62, 62, 62, 0.8);
    overflow: hidden;
}

.search svg {
    width: 12px;
    height: 12px;
    fill: none;
    stroke: white;
}

.search .town {
    width: 34px;
    height: 16px;
    stroke: none;
}

.search input {
    flex: 1;
    min-width: 0;
    padding: 0;
    border: none;
    background: none;
    color: white;
    font: 9px/14px "Noto Sans", sans-serif;
}

.search input::placeholder {
    color: #d5d5d5;
}

.running {
    position: relative;
}

.running::after {
    content: "";
    position: absolute;
    bottom: 1px;
    width: 4px;
    height: 2px;
    border-radius: 1px;
    background-color: #8c8c8c;
}

.apps .current {
    color: #b01846;
    border-radius: 3px;
    background-color: #1b191b;
}

.current::after {
    width: 11px;
    background-color: #6cbbe8;
}

.tray {
    display: flex;
    align-items: center;
    justify-content: flex-end;
    gap: 9px;
    padding-right: 13px;
    font-size: 9px;
}

.tray svg {
    width: 12px;
    height: 12px;
    fill: none;
    stroke: white;
}

.status {
    gap: 4px;
}

.clock {
    font-size: 8px;
    line-height: 11px;
    text-align: right;
}
```
